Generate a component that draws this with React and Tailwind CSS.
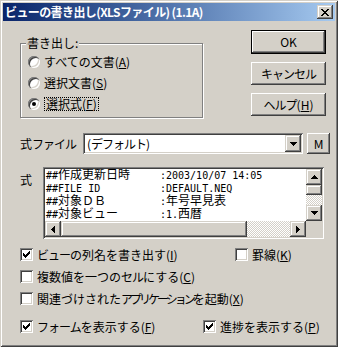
const raised =
  "shadow-[inset_-1px_-1px_#404040,inset_1px_1px_#ffffff,inset_-2px_-2px_#808080,inset_2px_2px_#d4d0c8]";
const raisedSb =
  "shadow-[inset_-1px_-1px_#404040,inset_1px_1px_#d4d0c8,inset_-2px_-2px_#808080,inset_2px_2px_#ffffff]";
const sunken =
  "shadow-[inset_1px_1px_#808080,inset_-1px_-1px_#ffffff,inset_2px_2px_#404040,inset_-2px_-2px_#d4d0c8]";
const dither =
  "bg-[repeating-conic-gradient(#d4d0c8_0%_25%,#ffffff_0%_50%)] bg-size-[2px_2px]";

const Mn = ({ children }) => (
  <span className="underline underline-offset-[1px] decoration-1">{children}</span>
);

// katakana runs are narrower in the original UI font
const Kn = ({ children, tight }) => (
  <span className={tight ? "tracking-[-3px]" : "tracking-[-1px]"}>{children}</span>
);

const Arrow = ({ dir = "down" }) => {
  const rows = [7, 5, 3, 1];
  if (dir === "right") {
    return (
      <svg width="4" height="7" viewBox="0 0 4 7" shapeRendering="crispEdges">
        {rows.map((h, i) => (
          <rect key={i} x={i} y={i} width="1" height={h} fill="#000" />
        ))}
      </svg>
    );
  }
  const list = dir === "up" ? [...rows].reverse() : rows;
  return (
    <svg width="7" height="4" viewBox="0 0 7 4" shapeRendering="crispEdges">
      {list.map((w, i) => (
        <rect key={i} x={(7 - w) / 2} y={i} width={w} height="1" fill="#000" />
      ))}
    </svg>
  );
};

const CloseGlyph = () => (
  <svg width="8" height="7" viewBox="0 0 8 7" shapeRendering="crispEdges">
    {[0, 1, 2, 3, 4, 5, 6].map((r) => {
      const d = Math.min(r, 6 - r);
      return (
        <g key={r}>
          <rect x={d} y={r} width="2" height="1" fill="#000" />
          <rect x={6 - d} y={r} width="2" height="1" fill="#000" />
        </g>
      );
    })}
  </svg>
);

const Check = ({ checked }) => (
  <span className={`relative w-[13px] h-[13px] shrink-0 bg-white ${sunken}`}>
    {checked && (
      <svg
        className="absolute left-[3px] top-[3px]"
        width="7"
        height="7"
        viewBox="0 0 7 7"
        shapeRendering="crispEdges"
      >
        {[2, 3, 4, 3, 2, 1, 0].map((y, x) => (
          <rect key={x} x={x} y={y} width="1" height="3" fill="#000" />
        ))}
      </svg>
    )}
  </span>
);

const Radio = ({ checked, focus, children }) => (
  <div className="flex items-center h-[14px] gap-[4px]">
    <span className="relative w-[12px] h-[12px] shrink-0 rounded-full bg-white shadow-[inset_1px_1px_#808080,inset_2px_2px_#404040,inset_-1px_-1px_#ffffff,inset_-2px_-2px_#d4d0c8]">
      {checked && (
        <span className="absolute left-[4px] top-[4px] w-[4px] h-[4px] rounded-full bg-black" />
      )}
    </span>
    {focus ? (
      <span className="border border-dotted border-black px-[1px] leading-[12px]">{children}</span>
    ) : (
      <span className="leading-[14px]">{children}</span>
    )}
  </div>
);

const CheckRow = ({ checked, children, width }) => (
  <div className={`flex items-center gap-[4px] h-[15px] ${width || ""}`}>
    <Check checked={checked} />
    <span className="leading-[15px] whitespace-nowrap">{children}</span>
  </div>
);

const Button = ({ children, primary }) =>
  primary ? (
    <div className="w-[75px] h-[24px] border border-black">
      <div className={`w-full h-full flex items-center justify-center ${raised}`}>{children}</div>
    </div>
  ) : (
    <div className={`w-[75px] h-[23px] flex items-center justify-center ${raised}`}>{children}</div>
  );

const lines = [
  { k: <><span>##</span><span className="text-[12px]">作成更新日時</span></>, v: <span>:2003/10/07 14:05</span> },
  { k: <span>##FILE ID</span>, v: <span>:DEFAULT.NEQ</span> },
  { k: <><span>##</span><span className="text-[12px]">対象ＤＢ</span></>, v: <><span>:</span><span className="text-[12px]">年号早見表</span></> },
  { k: <><span>##</span><span className="text-[12px]">対象ビュー</span></>, v: <><span>:1.</span><span className="text-[12px]">西暦</span></> },
];

export default function App() {
  return (
    <div className="w-[338px] h-[347px] bg-[#d4d0c8] p-[3px] flex flex-col overflow-hidden text-[12px] text-black font-['Noto_Sans_CJK_JP','Noto_Sans',sans-serif] shadow-[inset_1px_1px_#d4d0c8,inset_-1px_-1px_#404040,inset_2px_2px_#ffffff,inset_-2px_-2px_#808080]">
      {/* title bar */}
      <div className="h-[18px] shrink-0 flex items-center pl-[2px] pr-[2px] bg-linear-to-r from-[#0a246a] to-[#a6caf0]">
        <span className="text-white font-bold text-[12px] leading-none whitespace-nowrap tracking-[-0.6px]">
          ビューの書き出し(XLSファイル) (1.1A)
        </span>
        <div className={`ml-auto w-[16px] h-[14px] flex items-center justify-center bg-[#d4d0c8] ${raisedSb}`}>
          <CloseGlyph />
        </div>
      </div>

      <div className="pl-[17px] flex flex-col">
        {/* group + buttons */}
        <div className="flex items-start">
          <div className="relative mt-[22px] w-[183px] h-[75px] border border-[#808080] shadow-[inset_1px_1px_#ffffff,1px_1px_#ffffff]">
            <span className="absolute left-[5px] top-[-9px] bg-[#d4d0c8] px-[1px] leading-[16px]">
              書き出し:
            </span>
            <div className="flex flex-col gap-[7px] pt-[11px] pl-[7px]">
              <Radio>
                すべての文書(<Mn>A</Mn>)
              </Radio>
              <Radio>
                選択文書(<Mn>S</Mn>)
              </Radio>
              <Radio checked focus>
                選択式(<Mn>F</Mn>)
              </Radio>
            </div>
          </div>
          <div className="mt-[9px] ml-[48px] flex flex-col gap-[8px]">
            <Button primary>OK</Button>
            <Button>
              <Kn>キャンセル</Kn>
            </Button>
            <Button>
              <Kn>ヘルプ</Kn>(<Mn>H</Mn>)
            </Button>
          </div>
        </div>

        {/* formula file */}
        <div className="mt-[15px] flex items-center h-[21px]">
          <span className="w-[63px] leading-[14px]">
            式<Kn>ファイル</Kn>
          </span>
          <div className={`w-[220px] h-[21px] bg-white flex items-center p-[2px] ${sunken}`}>
            <span className="pl-[2px] leading-[14px] flex-1">
              (<Kn>デフォルト</Kn>)
            </span>
            <div className={`w-[16px] h-[17px] bg-[#d4d0c8] flex items-center justify-center ${raisedSb}`}>
              <Arrow />
            </div>
          </div>
          <div className={`ml-[4px] w-[23px] h-[21px] flex items-center justify-center ${raised}`}>M</div>
        </div>

        {/* formula text */}
        <div className="mt-[13px] flex items-start">
          <span className="w-[23px] mt-[6px] leading-[14px]">式</span>
          <div className={`w-[281px] h-[72px] p-[2px] bg-white ${sunken}`}>
            <div className="flex">
              <div className="w-[261px] h-[52px] pl-[1px] overflow-hidden font-['DejaVu_Sans_Mono','Noto_Sans_CJK_JP',monospace] text-[10px]">
                {lines.map((l, i) => (
                  <div key={i} className="flex h-[13px] leading-[13px] whitespace-pre">
                    <div className="w-[114px] shrink-0">{l.k}</div>
                    <div>{l.v}</div>
                  </div>
                ))}
              </div>
              <div className="w-[16px] h-[52px] flex flex-col">
                <div className={`h-[16px] bg-[#d4d0c8] flex items-center justify-center ${raisedSb}`}>
                  <Arrow dir="up" />
                </div>
                <div className={`h-[10px] bg-[#d4d0c8] ${raisedSb}`} />
                <div className={`flex-1 ${dither}`} />
                <div className={`h-[16px] bg-[#d4d0c8] flex items-center justify-center ${raisedSb}`}>
                  <Arrow />
                </div>
              </div>
            </div>
            <div className="flex h-[16px]">
              <div className={`w-[16px] bg-[#d4d0c8] flex items-center justify-center ${raisedSb}`}>
                <span className="rotate-180 flex">
                  <Arrow dir="right" />
                </span>
              </div>
              <div className={`w-[186px] bg-[#d4d0c8] ${raisedSb}`} />
              <div className={`w-[43px] ${dither}`} />
              <div className={`w-[16px] bg-[#d4d0c8] flex items-center justify-center ${raisedSb}`}>
                <Arrow dir="right" />
              </div>
              <div className="w-[16px] bg-[#d4d0c8]" />
            </div>
          </div>
        </div>

        {/* options */}
        <div className="mt-[8px] flex">
          <CheckRow checked width="w-[215px]">
            <Kn>ビュー</Kn>の列名を書き出す(<Mn>I</Mn>)
          </CheckRow>
          <CheckRow>
            罫線(<Mn>K</Mn>)
          </CheckRow>
        </div>
        <div className="mt-[7px]">
          <CheckRow>
            複数値を一つの<Kn>セル</Kn>にする(<Mn>C</Mn>)
          </CheckRow>
        </div>
        <div className="mt-[7px]">
          <CheckRow>
            関連づけされた<Kn tight>アプリケーション</Kn>を起動(<Mn>X</Mn>)
          </CheckRow>
        </div>
        <div className="mt-[13px] flex">
          <CheckRow checked width="w-[183px]">
            <Kn>フォーム</Kn>を表示する(<Mn>F</Mn>)
          </CheckRow>
          <CheckRow checked>
            進捗を表示する(<Mn>P</Mn>)
          </CheckRow>
        </div>
      </div>
    </div>
  );
}
